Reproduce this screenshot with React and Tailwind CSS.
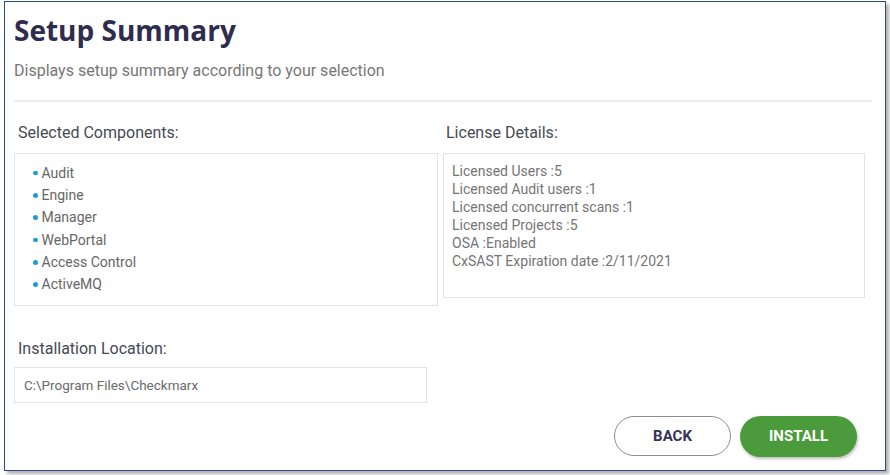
import React from 'react';

const components = ['Audit', 'Engine', 'Manager', 'WebPortal', 'Access Control', 'ActiveMQ'];

const license = [
  'Licensed Users :5',
  'Licensed Audit users :1',
  'Licensed concurrent scans :1',
  'Licensed Projects :5',
  'OSA :Enabled',
  'CxSAST Expiration date :2/11/2021',
];

const App = () => {
  return (
    <div className="w-[890px] h-[475px] bg-white overflow-hidden font-['Roboto',sans-serif]">
      <div className="ml-[4px] mt-[1px] w-[882px] h-[470px] border-[1.5px] border-[#2b4a8a] bg-white shadow-[3px_3px_3px_rgba(0,0,0,0.3)] flex flex-col pl-[9px] pr-[12px]">
        <h1 className="mt-[9px] text-[28px] leading-[38px] font-bold text-[#2e2c4f] font-['Open_Sans',sans-serif]">
          Setup Summary
        </h1>
        <p className="mt-[12px] text-[16px] leading-[20px] text-[#777777]">
          Displays setup summary according to your selection
        </p>
        <div className="mt-[19px] h-[2px] bg-[#ececec] w-[858px]" />

        <div className="flex mt-[20px] gap-[5px]">
          <div className="w-[424px] flex flex-col">
            <div className="pl-[4px] text-[16px] leading-[22px] text-[#454a55]">Selected Components:</div>
            <div className="mt-[9px] h-[153px] border border-[#e3e3e3] pl-[18px] pt-[8px]">
              {components.map((c) => (
                <div key={c} className="flex items-center h-[22.3px] text-[14px] text-[#666666]">
                  <span className="w-[4.5px] h-[4.5px] rounded-full bg-[#1d9bd9] mr-[4px]" />
                  {c}
                </div>
              ))}
            </div>
          </div>
          <div className="w-[422px] flex flex-col">
            <div className="pl-[3px] text-[16px] leading-[22px] text-[#454a55]">License Details:</div>
            <div className="mt-[9px] h-[145px] border border-[#e3e3e3] pl-[8px] pt-[8px]">
              {license.map((l) => (
                <div key={l} className="h-[18px] leading-[18px] text-[14px] text-[#757575]">
                  {l}
                </div>
              ))}
            </div>
          </div>
        </div>

        <div className="mt-[32px] pl-[4px] text-[16px] leading-[22px] text-[#454a55]">Installation Location:</div>
        <div className="mt-[7px] w-[413px] h-[36px] border border-[#e3e3e3] flex items-center pl-[9px] text-[13.5px] text-[#6a6a6a]">
          C:\Program Files\Checkmarx
        </div>

        <div className="flex justify-end gap-[9px] mt-[13px] pr-[16px]">
          <button className="w-[117px] h-[40px] rounded-full border-[1.5px] border-[#8a8d99] bg-white text-[15px] font-bold text-[#34345a]">
            BACK
          </button>
          <button className="w-[117px] h-[41px] rounded-full bg-[#4b9a3c] text-[15px] font-bold text-white shadow-[1px_2px_3px_rgba(0,0,0,0.25)]">
            INSTALL
          </button>
        </div>
      </div>
    </div>
  );
};

export default App;
